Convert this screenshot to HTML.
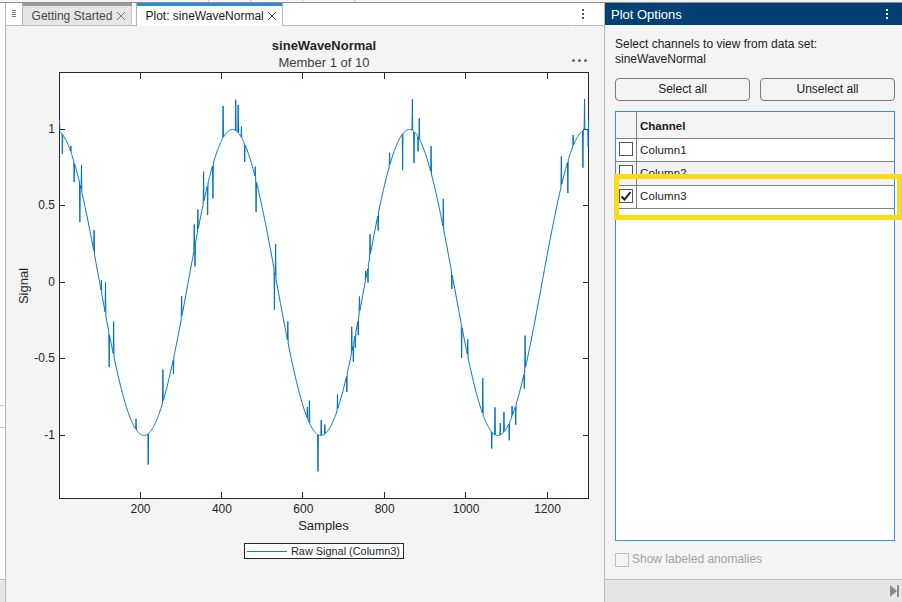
<!DOCTYPE html>
<html><head><meta charset="utf-8">
<style>
*{margin:0;padding:0;box-sizing:border-box}
html,body{width:902px;height:602px;overflow:hidden;background:#f4f4f4;font-family:"Liberation Sans",sans-serif;position:relative}
.a{position:absolute}
.t{position:absolute;white-space:nowrap;line-height:1}
</style></head><body>
<!-- top strip -->
<div class="a" style="left:0;top:0;width:902px;height:2px;background:#f4f4f4"></div>
<div class="a" style="left:0;top:2px;width:902px;height:1px;background:#909090"></div>
<div class="a" style="left:208px;top:0;width:1px;height:2px;background:#c8c8c8"></div>
<div class="a" style="left:250px;top:0;width:1px;height:2px;background:#c8c8c8"></div>
<div class="a" style="left:302px;top:0;width:1px;height:2px;background:#c8c8c8"></div>
<div class="a" style="left:354px;top:0;width:1px;height:2px;background:#c8c8c8"></div>

<!-- left strip -->
<div class="a" style="left:0;top:3px;width:5px;height:577px;background:#fff"></div>
<div class="a" style="left:0;top:405px;width:5px;height:1px;background:#c8c8c8"></div>
<div class="a" style="left:0;top:427px;width:5px;height:1px;background:#c8c8c8"></div>
<div class="a" style="left:0;top:579px;width:5px;height:1px;background:#c0c0c0"></div>
<div class="a" style="left:0;top:580px;width:5px;height:22px;background:#e6e6e6"></div>
<div class="a" style="left:5px;top:3px;width:1px;height:599px;background:#b4b4b4"></div>

<!-- tab bar -->
<div class="a" style="left:6px;top:3px;width:598px;height:23px;background:#fff"></div>
<div class="a" style="left:6px;top:25px;width:598px;height:1px;background:#bebebe"></div>
<!-- grip -->
<div class="a" style="left:12px;top:10px;width:4px;height:1px;background:#777"></div>
<div class="a" style="left:12px;top:12px;width:4px;height:1px;background:#777"></div>
<div class="a" style="left:12px;top:14px;width:4px;height:1px;background:#777"></div>
<div class="a" style="left:12px;top:16px;width:4px;height:1px;background:#777"></div>
<div class="a" style="left:22px;top:3px;width:1px;height:23px;background:#b4b4b4"></div>
<!-- getting started tab -->
<div class="a" style="left:23px;top:3px;width:109px;height:3px;background:#9a9a9a"></div>
<div class="a" style="left:23px;top:6px;width:109px;height:19px;background:#e6e6e6"></div>
<div class="a" style="left:131px;top:6px;width:1px;height:20px;background:#c4c4c4"></div>
<div class="t" style="left:31.6px;top:10px;font-size:12px;color:#4a4a4a">Getting Started</div>
<svg class="a" style="left:116px;top:11px" width="10" height="10" viewBox="0 0 10 10"><path d="M1 1L9 9M9 1L1 9" stroke="#6a6a6a" stroke-width="0.9"/></svg>
<!-- active tab -->
<div class="a" style="left:136px;top:3px;width:1px;height:23px;background:#b4b4b4"></div>
<div class="a" style="left:137px;top:3px;width:146px;height:23px;background:#fff"></div>
<div class="a" style="left:137px;top:3px;width:146px;height:3px;background:#2a8ae0"></div>
<div class="t" style="left:145.5px;top:10px;font-size:12px;color:#1a1a1a">Plot: sineWaveNormal</div>
<svg class="a" style="left:267px;top:11px" width="10" height="10" viewBox="0 0 10 10"><path d="M1 1L9 9M9 1L1 9" stroke="#3a3a3a" stroke-width="0.9"/></svg>
<div class="a" style="left:282px;top:3px;width:1px;height:23px;background:#b4b4b4"></div>
<div class="a" style="left:137px;top:25px;width:145px;height:1px;background:#fff"></div>
<div class="a" style="left:572px;top:25px;width:1px;height:1px;background:#e8e8e8"></div>
<!-- kebab -->
<div class="a" style="left:582px;top:9px;width:2px;height:2px;background:#555"></div>
<div class="a" style="left:582px;top:13px;width:2px;height:2px;background:#555"></div>
<div class="a" style="left:582px;top:17px;width:2px;height:2px;background:#555"></div>

<!-- panel -->
<div class="a" style="left:604px;top:3px;width:1px;height:599px;background:#bababa"></div>
<div class="a" style="left:605px;top:3px;width:297px;height:22px;background:#004073"></div>
<div class="t" style="left:611px;top:8px;font-size:13px;color:#fff">Plot Options</div>
<div class="a" style="left:886px;top:9px;width:2px;height:2px;background:#fff"></div>
<div class="a" style="left:886px;top:13px;width:2px;height:2px;background:#fff"></div>
<div class="a" style="left:886px;top:17px;width:2px;height:2px;background:#fff"></div>

<div class="t" style="left:615px;top:38px;font-size:12px;color:#212121">Select channels to view from data set:</div>
<div class="t" style="left:615px;top:53px;font-size:12px;color:#212121">sineWaveNormal</div>

<div class="a" style="left:615px;top:78px;width:135px;height:23px;border:1px solid #7a7a7a;border-radius:4px;background:#f4f4f4"></div>
<div class="t" style="left:615px;top:83px;width:135px;text-align:center;font-size:12px;color:#212121">Select all</div>
<div class="a" style="left:760px;top:78px;width:135px;height:23px;border:1px solid #7a7a7a;border-radius:4px;background:#f4f4f4"></div>
<div class="t" style="left:760px;top:83px;width:135px;text-align:center;font-size:12px;color:#212121">Unselect all</div>

<!-- table -->
<div class="a" style="left:615px;top:111px;width:280px;height:430px;border:1px solid #3c8fde;background:#fff"></div>
<div class="a" style="left:616px;top:112px;width:278px;height:26px;background:#f4f4f4"></div>
<div class="a" style="left:616px;top:138px;width:278px;height:1px;background:#808080"></div>
<div class="a" style="left:616px;top:162px;width:278px;height:23px;background:#f3f3f3"></div>
<div class="a" style="left:616px;top:161px;width:278px;height:1px;background:#808080"></div>
<div class="a" style="left:616px;top:185px;width:278px;height:1px;background:#808080"></div>
<div class="a" style="left:616px;top:208px;width:278px;height:1px;background:#808080"></div>
<div class="a" style="left:636px;top:112px;width:1px;height:97px;background:#808080"></div>
<div class="t" style="left:640px;top:120.5px;font-size:11.5px;font-weight:bold;color:#1a1a1a">Channel</div>
<div class="a" style="left:619px;top:142px;width:14px;height:14px;border:1px solid #555;background:#fff"></div>
<div class="t" style="left:640px;top:144.5px;font-size:11.5px;letter-spacing:0.1px;color:#212121">Column1</div>
<div class="a" style="left:619px;top:165px;width:14px;height:14px;border:1px solid #555;background:#fff"></div>
<div class="t" style="left:640px;top:167.5px;font-size:11.5px;letter-spacing:0.1px;color:#212121">Column2</div>
<div class="a" style="left:619px;top:189px;width:14px;height:14px;border:1px solid #555;background:#fff"></div>
<svg class="a" style="left:619px;top:189px" width="14" height="14" viewBox="0 0 14 14"><path d="M2.5 7.5L5.5 10.5L11.5 3" stroke="#1a1a1a" stroke-width="2" fill="none"/></svg>
<div class="t" style="left:640px;top:191px;font-size:11.5px;letter-spacing:0.1px;color:#212121">Column3</div>

<!-- yellow highlight -->
<div class="a" style="left:895px;top:179px;width:2px;height:36px;background:#fff"></div>
<div class="a" style="left:614px;top:174px;width:288px;height:46px;border:5px solid #fadc14"></div>

<!-- show labeled anomalies -->
<div class="a" style="left:615px;top:553px;width:14px;height:14px;border:1px solid #bdbdbd;background:#f4f4f4"></div>
<div class="t" style="left:632px;top:553px;font-size:12px;color:#a3a3a3">Show labeled anomalies</div>

<!-- status bar -->
<div class="a" style="left:605px;top:579px;width:297px;height:1px;background:#c0c0c0"></div>
<div class="a" style="left:605px;top:580px;width:297px;height:22px;background:#e6e6e6"></div>
<svg class="a" style="left:889px;top:584px" width="12" height="14" viewBox="0 0 12 14"><path d="M1 1L8 7L1 13Z" fill="#8c8c8c"/><rect x="8" y="1" width="2" height="12" fill="#8c8c8c"/></svg>

<!-- plot -->
<div class="t" style="left:224px;top:39px;width:200px;text-align:center;font-size:13px;font-weight:bold;color:#262626">sineWaveNormal</div>
<div class="t" style="left:224px;top:55.7px;width:200px;text-align:center;font-size:13px;color:#404040">Member 1 of 10</div>
<div class="a" style="left:572px;top:59px;width:3px;height:3px;border-radius:50%;background:#666"></div>
<div class="a" style="left:578px;top:59px;width:3px;height:3px;border-radius:50%;background:#666"></div>
<div class="a" style="left:584px;top:59px;width:3px;height:3px;border-radius:50%;background:#666"></div>

<svg class="a" style="left:0;top:0" width="604" height="602" viewBox="0 0 604 602">
<rect x="59.5" y="72.5" width="529" height="426" fill="#fff" stroke="#262626" stroke-width="1"/>

<path d="M140.5 498V492M140.5 73V79M221.5 498V492M221.5 73V79M302.5 498V492M302.5 73V79M384.5 498V492M384.5 73V79M465.5 498V492M465.5 73V79M547.5 498V492M547.5 73V79M60 129.5H65M588 129.5H583M60 205.5H65M588 205.5H583M60 282.5H65M588 282.5H583M60 358.5H65M588 358.5H583M60 435.5H65M588 435.5H583" stroke="#262626" stroke-width="1" fill="none"/>
<path d="M59.51 120.00L59.91 131.47L60.32 131.84L60.73 132.24L61.14 132.67L61.54 133.14L61.95 133.63L62.36 154.00L62.76 134.71L63.17 135.30L63.58 135.92L63.98 136.57L64.39 137.25L64.80 137.96L65.20 138.70L65.61 139.47L66.02 140.27L66.43 141.10L66.83 141.96L67.24 142.85L67.65 143.76L68.05 144.71L68.46 145.68L68.87 146.69L69.28 147.72L69.68 148.78L70.09 149.87L70.50 150.99L70.90 146.00L71.31 153.30L71.72 154.50L72.12 155.72L72.53 156.97L72.94 158.25L73.34 159.55L73.75 160.88L74.16 182.00L74.57 163.61L74.97 165.02L75.38 166.45L75.79 167.90L76.19 169.38L76.60 170.88L77.01 172.40L77.42 173.95L77.82 175.52L78.23 177.11L78.64 178.72L79.04 180.36L79.45 182.01L79.86 222.00L80.26 185.39L80.67 187.11L81.08 188.84L81.49 165.00L81.89 192.38L82.30 194.18L82.71 195.99L83.11 197.82L83.52 199.67L83.93 201.54L84.33 203.42L84.74 205.32L85.15 207.24L85.56 209.17L85.96 211.12L86.37 213.08L86.78 215.06L87.18 217.05L87.59 219.06L88.00 221.08L88.40 223.11L88.81 225.15L89.22 227.21L89.62 229.27L90.03 231.35L90.44 233.44L90.85 235.54L91.25 237.65L91.66 239.77L92.07 241.89L92.47 244.03L92.88 246.17L93.29 248.32L93.69 250.48L94.10 230.00L94.51 254.82L94.92 257.00L95.32 259.18L95.73 261.37L96.14 263.56L96.54 265.75L96.95 267.95L97.36 270.16L97.77 272.36L98.17 274.57L98.58 276.78L98.99 278.99L99.39 281.20L99.80 283.41L100.21 285.62L100.61 287.83L101.02 290.04L101.43 280.00L101.84 294.45L102.24 296.65L102.65 298.85L103.06 301.05L103.46 303.24L103.87 305.43L104.28 307.61L104.68 309.79L105.09 311.96L105.50 282.40L105.91 316.29L106.31 318.44L106.72 320.58L107.13 322.72L107.53 324.85L107.94 326.97L108.35 329.08L108.75 331.18L109.16 367.00L109.57 335.35L109.97 337.42L110.38 339.48L110.79 341.53L111.20 343.56L111.60 345.58L112.01 347.59L112.42 349.58L112.82 351.56L113.23 353.53L113.64 321.60L114.05 357.41L114.45 359.33L114.86 361.24L115.27 363.12L115.67 364.99L116.08 366.85L116.49 368.68L116.89 370.50L117.30 372.30L117.71 374.08L118.12 375.84L118.52 377.58L118.93 379.30L119.34 381.01L119.74 382.69L120.15 384.35L120.56 385.99L120.96 387.60L121.37 389.20L121.78 390.77L122.19 392.32L122.59 393.85L123.00 395.36L123.41 396.84L123.81 398.29L124.22 399.73L124.63 401.14L125.03 402.52L125.44 403.88L125.85 405.21L126.25 406.52L126.66 407.80L127.07 409.06L127.48 410.28L127.88 411.49L128.29 412.66L128.70 413.81L129.10 414.93L129.51 416.03L129.92 417.09L130.32 418.13L130.73 419.14L131.14 420.12L131.55 421.07L131.95 421.99L132.36 422.89L132.77 423.75L133.17 424.58L133.58 425.39L133.99 426.17L134.40 426.91L134.80 427.63L135.21 428.31L135.62 428.97L136.02 418.80L136.43 430.18L136.84 430.74L137.24 431.28L137.65 431.78L138.06 432.25L138.47 432.68L138.87 433.09L139.28 433.47L139.69 433.81L140.09 434.12L140.50 434.40L140.91 434.65L141.31 434.87L141.72 435.05L142.13 435.20L142.53 435.33L142.94 435.42L143.35 435.47L143.76 435.50L144.16 435.49L144.57 435.45L144.98 435.38L145.38 435.28L145.79 435.15L146.20 434.98L146.60 434.78L147.01 434.55L147.42 434.29L147.83 434.00L148.23 464.50L148.64 433.32L149.05 432.93L149.45 432.51L149.86 432.06L150.27 431.58L150.68 431.07L151.08 430.52L151.49 429.95L151.90 429.34L152.30 428.71L152.71 428.04L153.12 427.34L153.52 426.62L153.93 425.86L154.34 425.07L154.75 424.25L155.15 423.41L155.56 422.53L155.97 421.63L156.37 420.69L156.78 419.73L157.19 418.74L157.59 417.72L158.00 416.67L158.41 415.59L158.81 414.49L159.22 413.35L159.63 412.20L160.04 411.01L160.44 409.80L160.85 408.56L161.26 407.29L161.66 406.00L162.07 404.68L162.48 403.34L162.88 369.50L163.29 400.57L163.70 399.16L164.11 397.71L164.51 396.25L164.92 394.76L165.33 393.24L165.73 391.71L166.14 390.15L166.55 388.56L166.95 386.96L167.36 385.33L167.77 383.69L168.18 382.02L168.58 380.33L168.99 378.62L169.40 376.89L169.80 375.14L170.21 373.37L170.62 371.58L171.03 369.77L171.43 367.95L171.84 366.11L172.25 364.25L172.65 362.37L173.06 360.48L173.47 374.00L173.87 356.64L174.28 354.70L174.69 352.74L175.09 350.77L175.50 348.78L175.91 346.79L176.32 344.77L176.72 342.75L177.13 340.71L177.54 338.66L177.94 336.60L178.35 334.52L178.76 332.44L179.16 330.34L179.57 328.24L179.98 326.12L180.39 324.00L180.79 321.87L181.20 319.73L181.61 296.00L182.01 315.42L182.42 313.26L182.83 311.09L183.24 308.92L183.64 306.74L184.05 304.55L184.46 302.36L184.86 300.17L185.27 297.97L185.68 295.77L186.08 293.57L186.49 291.36L186.90 289.15L187.31 286.94L187.71 284.73L188.12 282.52L188.53 280.31L188.93 278.10L189.34 275.89L189.75 273.68L190.15 271.48L190.56 269.27L190.97 267.07L191.38 264.88L191.78 262.68L192.19 260.49L192.60 258.31L193.00 256.13L193.41 253.95L193.82 251.78L194.22 224.50L194.63 247.46L195.04 266.60L195.44 243.17L195.85 241.04L196.26 238.92L196.67 236.80L197.07 234.70L197.48 232.60L197.89 209.40L198.29 228.45L198.70 226.38L199.11 224.33L199.51 222.29L199.92 220.27L200.33 218.25L200.74 216.26L201.14 214.27L201.55 212.30L201.96 210.34L202.36 208.40L202.77 206.47L203.18 204.56L203.58 171.60L203.99 200.79L204.40 198.93L204.81 197.09L205.21 195.26L205.62 193.45L206.03 191.67L206.43 189.90L206.84 188.15L207.25 186.42L207.66 214.80L208.06 183.02L208.47 181.35L208.88 179.70L209.28 178.07L209.69 176.47L210.10 174.88L210.50 173.32L210.91 171.79L211.32 170.27L211.72 168.78L212.13 167.31L212.54 165.87L212.95 198.60L213.35 163.06L213.76 161.69L214.17 160.35L214.57 159.03L214.98 157.74L215.39 156.47L215.80 155.23L216.20 154.01L216.61 152.83L217.02 151.67L217.42 150.54L217.83 149.43L218.24 148.35L218.64 147.30L219.05 146.28L219.46 145.29L219.87 144.33L220.27 143.39L220.68 142.49L221.09 141.61L221.49 140.76L221.90 139.94L222.31 139.16L222.71 138.40L223.12 106.00L223.53 136.97L223.94 136.31L224.34 135.67L224.75 135.06L225.16 134.49L225.56 133.94L225.97 133.43L226.38 132.95L226.78 132.50L227.19 132.08L227.60 131.69L228.00 131.33L228.41 131.01L228.82 130.71L229.23 130.45L229.63 130.22L230.04 130.02L230.45 129.86L230.85 129.72L231.26 129.62L231.67 129.55L232.07 129.51L232.48 129.50L232.89 129.53L233.30 129.58L233.70 129.67L234.11 129.79L234.52 129.95L234.92 130.13L235.33 130.35L235.74 99.70L236.14 130.87L236.55 131.18L236.96 131.53L237.37 131.90L237.77 132.31L238.18 105.00L238.59 133.21L238.99 133.71L239.40 134.24L239.81 134.81L240.21 135.40L240.62 136.02L241.03 136.68L241.44 126.60L241.84 138.07L242.25 138.82L242.66 139.59L243.06 140.40L243.47 141.23L243.88 142.10L244.28 142.99L244.69 162.00L245.10 144.86L245.51 145.84L245.91 146.85L246.32 147.89L246.73 148.95L247.13 150.05L247.54 151.17L247.95 152.31L248.35 153.49L248.76 154.69L249.17 155.92L249.58 157.17L249.98 158.46L250.39 159.76L250.80 161.10L251.20 162.45L251.61 163.84L252.02 165.24L252.43 166.68L252.83 168.13L253.24 169.61L253.65 171.12L254.05 172.65L254.46 174.20L254.87 175.77L255.27 166.70L255.68 178.98L256.09 212.00L256.50 182.28L256.90 183.96L257.31 185.66L257.72 187.38L258.12 189.12L258.53 190.89L258.94 192.67L259.34 194.46L259.75 196.28L260.16 198.12L260.56 199.97L260.97 201.84L261.38 203.73L261.79 205.63L262.19 207.55L262.60 209.48L263.01 211.44L263.41 213.40L263.82 215.38L264.23 217.37L264.63 219.38L265.04 221.40L265.45 223.43L265.86 225.48L266.26 227.54L266.67 229.61L267.08 231.69L267.48 233.78L267.89 235.88L268.30 237.99L268.70 240.11L269.11 242.24L269.52 244.37L269.93 246.52L270.33 248.67L270.74 250.83L271.15 253.00L271.55 255.17L271.96 257.35L272.37 259.53L272.77 261.72L273.18 263.91L273.59 266.11L274.00 268.31L274.40 309.80L274.81 272.71L275.22 274.92L275.62 244.20L276.03 279.34L276.44 281.55L276.85 283.76L277.25 285.97L277.66 288.18L278.07 290.39L278.47 292.60L278.88 294.80L279.29 297.00L279.69 299.20L280.10 301.40L280.51 303.59L280.91 305.78L281.32 307.96L281.73 310.14L282.14 312.31L282.54 314.47L282.95 316.63L283.36 318.78L283.76 320.93L284.17 323.06L284.58 325.19L284.99 327.31L285.39 329.42L285.80 331.52L286.21 333.61L286.61 335.68L287.02 337.75L287.43 339.81L287.83 321.40L288.24 343.88L288.65 345.90L289.05 347.91L289.46 349.90L289.87 351.88L290.28 353.84L290.68 355.79L291.09 357.72L291.50 359.64L291.90 361.54L292.31 363.42L292.72 365.29L293.12 367.14L293.53 368.97L293.94 370.79L294.35 372.58L294.75 374.36L295.16 376.12L295.57 377.86L295.97 379.58L296.38 381.28L296.79 382.95L297.19 384.61L297.60 386.25L298.01 387.86L298.42 389.45L298.82 391.02L299.23 392.57L299.64 394.09L300.04 395.59L300.45 397.07L300.86 398.52L301.26 399.95L301.67 401.36L302.08 402.74L302.49 404.09L302.89 405.42L303.30 406.73L303.71 408.00L304.11 409.25L304.52 410.48L304.93 411.68L305.33 412.85L305.74 413.99L306.15 415.11L306.56 416.20L306.96 417.26L307.37 407.00L307.78 419.30L308.18 420.27L308.59 421.22L309.00 422.14L309.40 400.50L309.81 423.89L310.22 424.72L310.63 425.52L311.03 426.29L311.44 427.03L311.85 427.74L312.25 428.42L312.66 429.07L313.07 429.69L313.48 430.27L313.88 430.83L314.29 431.36L314.70 431.85L315.10 432.32L315.51 432.75L315.92 433.15L316.32 433.52L316.73 433.86L317.14 434.17L317.54 434.44L317.95 471.50L318.36 434.90L318.77 435.08L319.17 435.23L319.58 435.34L319.99 435.43L320.39 435.48L320.80 435.50L321.21 420.00L321.62 435.44L322.02 435.37L322.43 435.26L322.84 435.12L323.24 434.95L323.65 434.75L324.06 434.51L324.46 434.25L324.87 424.50L325.28 433.62L325.68 433.26L326.09 432.87L326.50 432.44L326.91 431.99L327.31 431.50L327.72 430.98L328.13 430.43L328.53 429.85L328.94 429.24L329.35 428.60L329.75 427.93L330.16 427.23L330.57 426.50L330.98 425.73L331.38 424.94L331.79 424.12L332.20 423.27L332.60 422.39L333.01 421.48L333.42 420.54L333.82 419.57L334.23 418.58L334.64 417.55L335.05 416.50L335.45 415.42L335.86 414.31L336.27 413.17L336.67 412.01L337.08 410.82L337.49 394.70L337.89 408.36L338.30 407.09L338.71 405.79L339.12 404.47L339.52 403.12L339.93 401.75L340.34 400.35L340.74 398.93L341.15 397.48L341.56 396.01L341.96 394.52L342.37 393.00L342.78 391.46L343.19 389.90L343.59 388.31L344.00 386.70L344.41 385.07L344.81 383.42L345.22 381.75L345.63 380.06L346.03 378.34L346.44 376.61L346.85 392.00L347.26 373.08L347.66 371.29L348.07 369.48L348.48 367.66L348.88 365.81L349.29 363.95L349.70 362.07L350.11 360.17L350.51 358.26L350.92 356.33L351.33 354.39L351.73 326.70L352.14 350.45L352.55 348.47L352.95 346.46L353.36 362.00L353.77 342.42L354.17 340.38L354.58 338.33L354.99 336.26L355.40 347.70L355.80 332.10L356.21 330.01L356.62 327.90L357.02 325.78L357.43 323.66L357.84 321.53L358.25 334.90L358.65 317.24L359.06 315.08L359.47 296.50L359.87 310.75L360.28 308.57L360.69 306.39L361.09 304.20L361.50 302.01L361.91 299.82L362.31 297.62L362.72 295.42L363.13 293.21L363.54 291.01L363.94 288.80L364.35 286.59L364.76 284.38L365.16 282.17L365.57 271.00L365.98 277.75L366.38 275.54L366.79 273.33L367.20 271.13L367.61 268.92L368.01 282.60L368.42 264.52L368.83 262.33L369.23 260.14L369.64 257.96L370.05 234.20L370.45 253.60L370.86 251.44L371.27 249.27L371.68 247.12L372.08 244.97L372.49 242.83L372.90 240.70L373.30 238.58L373.71 236.47L374.12 234.36L374.52 232.27L374.93 230.19L375.34 228.12L375.75 226.05L376.15 224.01L376.56 221.97L376.97 219.94L377.37 217.93L377.78 215.94L378.19 230.70L378.59 211.98L379.00 210.03L379.41 208.09L379.82 206.17L380.22 204.26L380.63 202.37L381.04 200.49L381.44 198.63L381.85 196.79L382.26 194.97L382.66 193.17L383.07 191.38L383.48 189.62L383.89 187.87L384.29 186.14L384.70 184.43L385.11 182.75L385.51 181.08L385.92 179.44L386.33 177.81L386.74 176.21L387.14 174.63L387.55 173.08L387.96 171.54L388.36 170.03L388.77 168.55L389.18 167.08L389.58 152.80L389.99 164.23L390.40 162.84L390.80 161.47L391.21 160.13L391.62 158.82L392.03 157.53L392.43 156.27L392.84 155.03L393.25 153.82L393.65 152.64L394.06 151.49L394.47 150.36L394.88 149.26L395.28 148.18L395.69 147.14L396.10 146.12L396.50 145.13L396.91 144.18L397.32 143.25L397.72 142.34L398.13 141.47L398.54 140.63L398.94 139.82L399.35 139.03L399.76 138.28L400.17 137.56L400.57 136.86L400.98 136.20L401.39 135.57L401.79 134.97L402.20 134.40L402.61 170.20L403.01 133.35L403.42 132.87L403.83 132.43L404.24 132.01L404.64 131.63L405.05 131.28L405.46 130.96L405.86 130.67L406.27 130.41L406.68 130.19L407.08 129.99L407.49 129.83L407.90 129.70L408.31 129.60L408.71 129.54L409.12 129.51L409.53 129.50L409.93 129.53L410.34 129.60L410.75 129.69L411.15 129.81L411.56 129.97L411.97 130.16L412.38 99.30L412.78 130.64L413.19 130.92L413.60 131.24L414.00 163.00L414.41 131.97L414.82 132.38L415.22 132.82L415.63 133.29L416.04 133.80L416.45 134.33L416.85 134.90L417.26 135.50L417.67 136.12L418.07 151.40L418.48 137.47L418.89 138.19L419.29 118.20L419.70 139.72L420.11 140.53L420.52 141.37L420.92 142.24L421.33 143.14L421.74 144.06L422.14 145.02L422.55 146.00L422.96 147.02L423.37 148.06L423.77 149.13L424.18 150.22L424.59 151.35L424.99 152.50L425.40 153.68L425.81 154.89L426.21 156.12L426.62 157.38L427.03 158.66L427.44 159.97L427.84 161.31L428.25 162.67L428.66 164.06L429.06 165.47L429.47 166.91L429.88 168.37L430.28 169.85L430.69 171.36L431.10 146.00L431.50 174.45L431.91 176.02L432.32 177.62L432.73 179.24L433.13 180.88L433.54 182.55L433.95 184.23L434.35 185.94L434.76 187.66L435.17 189.40L435.57 191.17L435.98 192.95L436.39 194.75L436.80 196.57L437.20 198.41L437.61 200.27L438.02 202.14L438.42 204.03L438.83 205.94L439.24 207.86L439.64 209.80L440.05 211.75L440.46 213.72L440.87 215.70L441.27 217.69L441.68 219.70L442.09 221.73L442.49 223.76L442.90 225.81L443.31 199.00L443.71 229.94L444.12 232.02L444.53 234.11L444.94 236.21L445.34 238.33L445.75 240.45L446.16 242.58L446.56 244.72L446.97 246.86L447.38 249.01L447.78 251.18L448.19 253.34L448.60 255.52L449.01 257.69L449.41 259.88L449.82 262.07L450.23 264.26L450.63 266.46L451.04 268.66L451.45 270.86L451.85 289.00L452.26 275.27L452.67 277.48L453.08 279.69L453.48 281.90L453.89 284.11L454.30 286.32L454.70 288.53L455.11 290.74L455.52 292.95L455.92 295.15L456.33 297.35L456.74 299.55L457.15 301.75L457.55 304.00L457.96 306.13L458.37 308.31L458.77 310.48L459.18 312.66L459.59 314.82L460.00 316.98L460.40 319.13L460.81 321.27L461.22 323.40L461.62 358.00L462.03 327.65L462.44 329.75L462.84 331.85L463.25 333.94L463.66 336.02L464.06 338.08L464.47 340.14L464.88 342.18L465.29 344.21L465.69 346.22L466.10 348.23L466.51 350.22L466.91 352.19L467.32 354.15L467.73 339.30L468.13 358.03L468.54 359.94L468.95 361.84L469.36 363.72L469.76 365.59L470.17 367.44L470.58 369.27L470.98 371.08L471.39 372.87L471.80 374.64L472.20 376.40L472.61 378.14L473.02 379.85L473.43 381.55L473.83 383.22L474.24 384.87L474.65 386.51L475.05 388.12L475.46 389.71L475.87 391.27L476.27 392.82L476.68 394.34L477.09 395.83L477.50 397.31L477.90 398.76L478.31 400.18L478.72 401.58L479.12 402.96L479.53 404.31L479.94 405.63L480.34 406.93L480.75 408.20L481.16 409.45L481.57 410.67L481.97 411.87L482.38 413.03L482.79 378.20L483.19 415.28L483.60 416.37L484.01 417.43L484.41 418.45L484.82 419.45L485.23 420.42L485.64 421.37L486.04 422.28L486.45 423.17L486.86 424.02L487.26 424.85L487.67 425.64L488.08 426.41L488.48 427.14L488.89 427.85L489.30 428.52L489.71 429.17L490.11 429.78L490.52 430.37L490.93 430.92L491.33 431.44L491.74 448.50L492.15 432.39L492.55 432.82L492.96 433.21L493.37 433.58L493.78 433.91L494.18 434.21L494.59 434.48L495.00 407.40L495.40 434.93L495.81 435.10L496.22 435.25L496.62 435.36L497.03 435.44L497.44 435.48L497.85 435.50L498.25 435.48L498.66 435.43L499.07 435.35L499.47 435.24L499.88 435.10L500.29 423.10L500.69 434.71L501.10 434.47L501.51 434.20L501.92 433.90L502.32 433.56L502.73 433.20L503.14 432.80L503.54 432.37L503.95 411.90L504.36 431.42L504.76 430.90L505.17 430.34L505.58 429.76L505.99 429.14L506.39 428.50L506.80 427.82L507.21 427.11L507.61 426.38L508.02 425.61L508.43 424.81L508.83 423.99L509.24 440.30L509.65 422.24L510.06 421.33L510.46 420.39L510.87 419.41L511.28 418.41L511.68 417.38L512.09 405.90L512.50 415.24L512.90 414.13L513.31 412.99L513.72 411.82L514.13 410.62L514.53 409.40L514.94 408.15L515.35 406.88L515.75 424.60L516.16 404.25L516.57 402.90L516.97 401.53L517.38 400.12L517.79 398.70L518.20 397.25L518.60 395.77L519.01 394.28L519.42 392.75L519.82 391.21L520.23 389.64L520.64 388.05L521.04 386.44L521.45 384.81L521.86 383.15L522.27 381.48L522.67 379.78L523.08 378.07L523.49 376.33L523.89 374.57L524.30 388.70L524.71 371.01L525.12 335.60L525.52 367.36L525.93 365.51L526.34 363.65L526.74 361.77L527.15 359.87L527.56 357.95L527.96 356.02L528.37 354.07L528.78 352.11L529.18 350.14L529.59 348.15L530.00 346.14L530.41 344.13L530.81 342.10L531.22 340.05L531.63 338.00L532.03 335.93L532.44 333.86L532.85 331.77L533.25 329.67L533.66 327.56L534.07 325.45L534.48 323.32L534.88 321.18L535.29 319.04L535.70 316.89L536.10 314.73L536.51 312.57L536.92 310.40L537.33 308.22L537.73 306.04L538.14 303.85L538.55 301.66L538.95 299.47L539.36 297.27L539.77 295.07L540.17 292.86L540.58 290.65L540.99 288.45L541.39 286.24L541.80 284.03L542.21 281.81L542.62 279.60L543.02 277.39L543.43 275.19L543.84 272.98L544.24 270.77L544.65 268.57L545.06 266.37L545.46 264.17L545.87 261.98L546.28 259.79L546.69 257.61L547.09 255.43L547.50 253.26L547.91 251.09L548.31 248.93L548.72 246.78L549.13 244.63L549.53 242.49L549.94 240.36L550.35 238.24L550.76 236.13L551.16 234.03L551.57 231.94L551.98 229.85L552.38 227.78L552.79 225.73L553.20 223.68L553.61 221.64L554.01 219.62L554.42 217.61L554.83 215.62L555.23 213.64L555.64 211.67L556.05 209.72L556.45 207.78L556.86 205.86L557.27 203.95L557.67 202.07L558.08 200.19L558.49 198.34L558.90 196.50L559.30 194.68L559.71 192.88L560.12 191.10L560.52 189.33L560.93 187.59L561.34 156.40L561.74 184.16L562.15 182.48L562.56 180.82L562.97 179.18L563.37 177.56L563.78 175.96L564.19 174.38L564.59 172.83L565.00 171.30L565.41 169.79L565.82 168.31L566.22 166.85L566.63 165.42L567.04 164.00L567.44 162.62L567.85 193.10L568.26 159.92L568.66 158.61L569.07 157.33L569.48 156.07L569.88 154.84L570.29 153.63L570.70 152.45L571.11 151.30L571.51 150.18L571.92 149.08L572.33 148.01L572.73 146.97L573.14 135.10L573.55 144.98L573.95 144.02L574.36 143.10L574.77 142.20L575.18 141.34L575.58 140.50L575.99 139.69L576.40 138.91L576.80 138.16L577.21 137.44L577.62 136.76L578.02 136.10L578.43 135.47L578.84 134.88L579.25 134.31L579.65 133.78L580.06 133.27L580.47 132.80L580.87 132.36L581.28 131.95L581.69 131.57L582.10 131.22L582.50 130.91L582.91 167.70L583.32 130.37L583.72 130.15L584.13 129.97L584.54 99.10L584.94 129.68L585.35 129.59L585.76 129.53L586.16 129.50L586.57 129.51L586.98 129.54L587.39 129.61L587.79 129.71L588.20 147.00L588.61 120.20" stroke="#0072bd" stroke-width="1" fill="none" stroke-linejoin="round"/>
</svg>
<div class="t" style="left:290px;top:519px;width:67px;text-align:center;font-size:13px;color:#262626">Samples</div>
<div class="t" style="left:22.5px;top:286px;font-size:13px;color:#262626;transform:translate(-50%,-50%) rotate(-90deg);transform-origin:center">Signal</div>

<!-- legend -->
<div class="a" style="left:244px;top:543px;width:160px;height:16px;border:1px solid #262626;background:#fff"></div>
<div class="a" style="left:247px;top:551px;width:40px;height:1px;background:#1a7cc4"></div>
<div class="t" style="left:291px;top:546px;font-size:10.9px;color:#262626">Raw Signal (Column3)</div>
<div class="t" style="left:110.5px;top:503px;width:60px;text-align:center;font-size:12px;color:#262626">200</div>
<div class="t" style="left:191.9px;top:503px;width:60px;text-align:center;font-size:12px;color:#262626">400</div>
<div class="t" style="left:273.3px;top:503px;width:60px;text-align:center;font-size:12px;color:#262626">600</div>
<div class="t" style="left:354.7px;top:503px;width:60px;text-align:center;font-size:12px;color:#262626">800</div>
<div class="t" style="left:436.1px;top:503px;width:60px;text-align:center;font-size:12px;color:#262626">1000</div>
<div class="t" style="left:517.5px;top:503px;width:60px;text-align:center;font-size:12px;color:#262626">1200</div>
<div class="t" style="left:0px;top:122.5px;width:55px;text-align:right;font-size:12px;color:#262626">1</div>
<div class="t" style="left:0px;top:199.0px;width:55px;text-align:right;font-size:12px;color:#262626">0.5</div>
<div class="t" style="left:0px;top:275.5px;width:55px;text-align:right;font-size:12px;color:#262626">0</div>
<div class="t" style="left:0px;top:352.0px;width:55px;text-align:right;font-size:12px;color:#262626">-0.5</div>
<div class="t" style="left:0px;top:428.5px;width:55px;text-align:right;font-size:12px;color:#262626">-1</div>
</body></html>
